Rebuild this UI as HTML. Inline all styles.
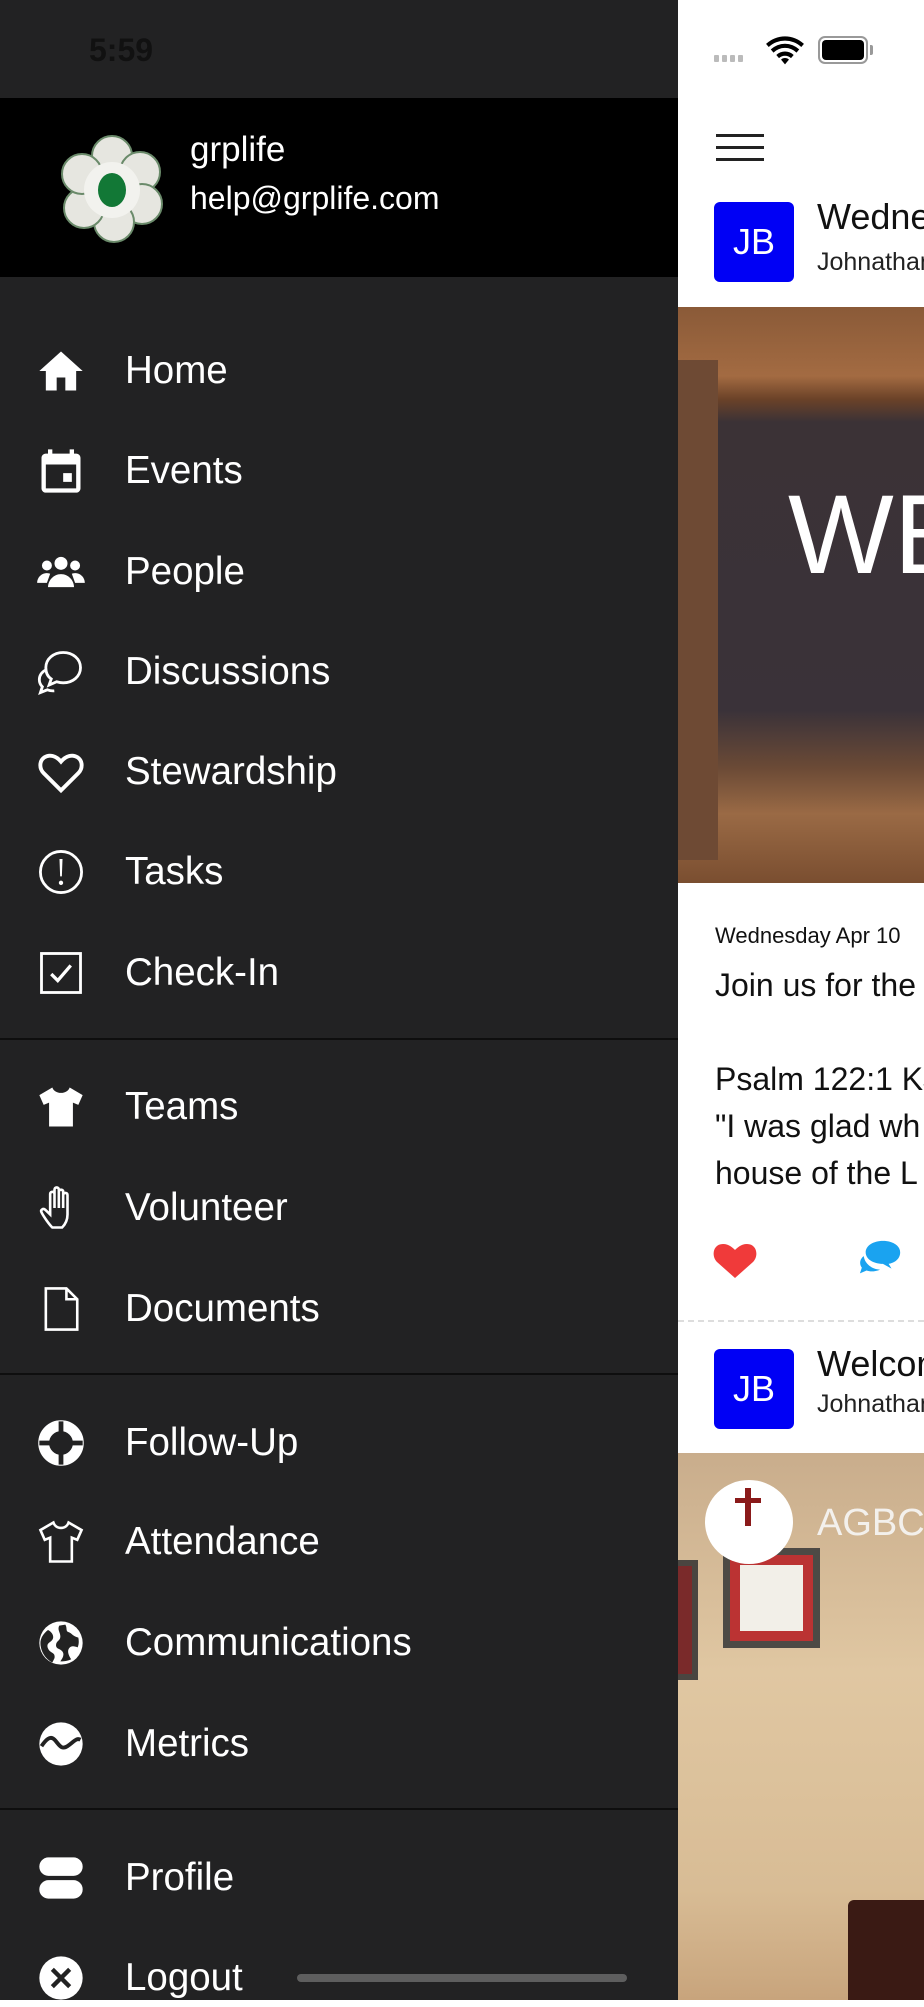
<!DOCTYPE html>
<html><head><meta charset="utf-8"><style>
*{margin:0;padding:0;box-sizing:border-box}
body{width:924px;height:2000px;overflow:hidden;position:relative;background:#fff;font-family:"Liberation Sans",sans-serif}
#drawer{position:absolute;left:0;top:0;width:678px;height:2000px;background:#222223}
#hdr{position:absolute;left:0;top:98px;width:678px;height:179px;background:#000}
.item{position:absolute;left:0;width:678px;height:60px}
.item svg{position:absolute;left:35px;top:5px;width:52px;height:52px}
.item span{position:absolute;left:125px;top:9px;color:#fff;font-size:38.5px;font-weight:300}
.div{position:absolute;left:0;width:678px;height:2px;background:#0e0e0e}
#right{position:absolute;left:678px;top:0;width:246px;height:2000px;background:#fff;overflow:hidden}
</style></head><body>
<div id="drawer">
<div style="position:absolute;left:89px;top:32px;font-size:32px;font-weight:bold;color:#111">5:59</div>
<div id="hdr">
<svg style="position:absolute;left:58px;top:34px" width="108" height="112" viewBox="0 0 108 112">
<g fill="#e6e6e0" stroke="#6a8a6a" stroke-width="2">
<circle cx="54" cy="24" r="20"/><circle cx="82" cy="40" r="20"/><circle cx="84" cy="72" r="20"/><circle cx="56" cy="90" r="20"/><circle cx="26" cy="76" r="20"/><circle cx="24" cy="42" r="20"/></g>
<circle cx="54" cy="58" r="28" fill="#f2f2ee"/><ellipse cx="54" cy="58" rx="14" ry="17" fill="#127836"/></svg>
<div style="position:absolute;left:190px;top:32px;color:#fff;font-size:35px;font-weight:300">grplife</div>
<div style="position:absolute;left:190px;top:82px;color:#fff;font-size:32px;font-weight:300">help@grplife.com</div>
</div>

<div class="item" style="top:340px"><svg viewBox="0 0 24 24"><path fill="#fff" d="M10 21v-6h4v6h5v-9h3L12 3 2 12h3v9z"/></svg><span>Home</span></div>
<div class="item" style="top:440px"><svg viewBox="0 0 24 24"><path fill="#fff" d="M19 4h-1V2h-2v2H8V2H6v2H5c-1.1 0-2 .9-2 2v14c0 1.1.9 2 2 2h14c1.1 0 2-.9 2-2V6c0-1.1-.9-2-2-2zm0 16H5V9h14v11zm-6-7h4v4h-4z"/></svg><span>Events</span></div>
<div class="item" style="top:541px"><svg viewBox="0 0 24 24"><g fill="#fff"><circle cx="12" cy="8" r="3"/><path d="M6 19c0-3 2.5-6 6-6s6 3 6 6z"/><circle cx="5.5" cy="9" r="2.3"/><circle cx="18.5" cy="9" r="2.3"/><path d="M1 17c0-2.5 2-4.5 4.5-4.5 1 0 1.5.3 1.5.3L5.5 17zM23 17c0-2.5-2-4.5-4.5-4.5-1 0-1.5.3-1.5.3l1.5 4.2z"/></g></svg><span>People</span></div>
<div class="item" style="top:641px"><svg viewBox="0 0 24 24"><path fill="none" stroke="#fff" stroke-width="1.3" d="M13 3c4.5 0 8 3 8 7s-3.5 7-8 7c-1 0-2-.2-3-.5L6.5 18l1-2.8C5.6 14 5 12 5 10c0-4 3.5-7 8-7zM5 11c-2 1-3 2.8-3 4.5 0 1.3.5 2.4 1.4 3.3L2.5 21.5l3.2-1.3c1 .4 2 .6 3.2.5"/></svg><span>Discussions</span></div>
<div class="item" style="top:741px"><svg viewBox="0 0 24 24"><path fill="none" stroke="#fff" stroke-width="1.8" d="M12 20.5 4 12.5C1.8 10.3 2 6.8 4.4 5.2 6.6 3.8 9.6 4.4 12 7.2c2.4-2.8 5.4-3.4 7.6-2 2.4 1.6 2.6 5.1.4 7.3z"/></svg><span>Stewardship</span></div>
<div class="item" style="top:841px"><svg viewBox="0 0 24 24"><circle cx="12" cy="12" r="9.5" fill="none" stroke="#fff" stroke-width="1.3"/><path fill="#fff" d="M11.3 6h1.4l-.3 8h-.8zM12 16a1 1 0 1 1 0 2 1 1 0 0 1 0-2z"/></svg><span>Tasks</span></div>
<div class="item" style="top:942px"><svg viewBox="0 0 24 24"><rect x="3" y="3" width="18" height="18" fill="none" stroke="#fff" stroke-width="1.3"/><path fill="none" stroke="#fff" stroke-width="1.5" d="M7.5 12.5l3 3 6-7"/></svg><span>Check-In</span></div>
<div class="div" style="top:1038px"></div>
<div class="item" style="top:1076px"><svg viewBox="0 0 24 24"><path fill="#fff" d="M8 3 2 6.5 4 11l2.5-1V21h11V10l2.5 1 2-4.5L16 3c-.5 1.5-2 2.5-4 2.5S8.5 4.5 8 3z"/></svg><span>Teams</span></div>
<div class="item" style="top:1177px"><svg viewBox="0 0 24 24"><path fill="none" stroke="#fff" stroke-width="1.2" d="M8 21c-1.5-1.5-4-5-5-7-.6-1.2.8-2 1.7-1.2L7 15V5.5c0-1.3 2-1.3 2 0V12V3.5c0-1.3 2-1.3 2 0V12V4.5c0-1.3 2-1.3 2 0V12V6c0-1.3 2-1.3 2 0v9c0 3-1.5 5-2.5 6z"/></svg><span>Volunteer</span></div>
<div class="item" style="top:1278px"><svg viewBox="0 0 24 24"><path fill="none" stroke="#fff" stroke-width="1.2" d="M5 2.5h9.5L19.5 7.5V21.5H5zM14.5 2.5v5h5"/></svg><span>Documents</span></div>
<div class="div" style="top:1373px"></div>
<div class="item" style="top:1412px"><svg viewBox="0 0 24 24"><circle cx="12" cy="12" r="8" fill="none" stroke="#fff" stroke-width="5"/><path stroke="#222" stroke-width="2.2" d="M12 2v5M12 17v5M2 12h5M17 12h5"/></svg><span>Follow-Up</span></div>
<div class="item" style="top:1511px"><svg viewBox="0 0 24 24"><path fill="none" stroke="#fff" stroke-width="1.2" d="M8.5 3 2.5 6.5 4.5 11l2.5-1V21h10V10l2.5 1 2-4.5-6-3.5c-.5 1.5-1.8 2.5-3.5 2.5S9 4.5 8.5 3z"/></svg><span>Attendance</span></div>
<div class="item" style="top:1612px"><svg viewBox="0 0 24 24"><circle cx="12" cy="12" r="10" fill="#fff"/><path fill="#222" d="M6 6c2 1 3 3 2 4.5S5 12 6 14.5 9.5 16 9 19l-1 2c-3-1.5-5.5-5-5.5-9C2.5 9.7 4 7.5 6 6zM14 3.5c1 1.5 0 3 1.5 3.5s2 2 4.5 2.5c.3 1.5.3 3-.3 4.5-1.5-.5-3-1-4 .5s0 3.5 1 5c-2 1-4 1-5 1 1-1.5 2-3 1-4.5s-3-1-3-3 2-2 2-4-1.5-3-.5-5z"/></svg><span>Communications</span></div>
<div class="item" style="top:1713px"><svg viewBox="0 0 24 24"><circle cx="12" cy="12" r="10" fill="#fff"/><path fill="none" stroke="#222" stroke-width="1.8" d="M3 13c2-3 4-5 6-3s3 5 6 3 4-4 6-3"/></svg><span>Metrics</span></div>
<div class="div" style="top:1808px"></div>
<div class="item" style="top:1847px"><svg viewBox="0 0 24 24"><rect x="2" y="2.5" width="20" height="8.5" rx="4.2" fill="#fff"/><rect x="2" y="13" width="20" height="8.5" rx="4.2" fill="#fff"/></svg><span>Profile</span></div>
<div class="item" style="top:1947px"><svg viewBox="0 0 24 24"><circle cx="12" cy="12" r="10" fill="#fff"/><path stroke="#222" stroke-width="2" d="M8 8l8 8M16 8l-8 8"/></svg><span>Logout</span></div>
<div style="position:absolute;left:297px;top:1974px;width:330px;height:8px;border-radius:4px;background:#5e5e5e"></div>
</div>

<div id="right">
<div style="position:absolute;left:36px;top:55px;display:flex;gap:3px"><i style="width:5px;height:7px;background:#bbb;border-radius:1px"></i><i style="width:5px;height:7px;background:#bbb;border-radius:1px"></i><i style="width:5px;height:7px;background:#bbb;border-radius:1px"></i><i style="width:5px;height:7px;background:#bbb;border-radius:1px"></i></div>
<svg style="position:absolute;left:88px;top:36px" width="38" height="30" viewBox="0 0 24 19"><path fill="#000" d="M12 18l-2.5-3a3.5 3.5 0 0 1 5 0zM6.5 12a8 8 0 0 1 11 0l-1.7 2a5.5 5.5 0 0 0-7.6 0zM3 8.5a13 13 0 0 1 18 0l-1.7 2a10.5 10.5 0 0 0-14.6 0zM0 5a17.5 17.5 0 0 1 24 0l-1.7 2A15 15 0 0 0 1.7 7z"/></svg>
<div style="position:absolute;left:140px;top:36px;width:50px;height:28px;border:2px solid #999;border-radius:7px;padding:2px"><div style="width:100%;height:100%;background:#000;border-radius:4px"></div></div>
<div style="position:absolute;left:192px;top:45px;width:3px;height:10px;background:#999;border-radius:0 2px 2px 0"></div>
<div style="position:absolute;left:38px;top:134px;width:48px;height:3px;background:#222;box-shadow:0 12px 0 #222,0 24px 0 #222"></div>
<div style="position:absolute;left:36px;top:202px;width:80px;height:80px;background:#0000f5;border-radius:6px;color:#fff;font-size:36px;text-align:center;line-height:80px">JB</div>
<div style="position:absolute;left:139px;top:196px;font-size:36px;color:#111;white-space:nowrap">Wednesday</div>
<div style="position:absolute;left:139px;top:248px;font-size:25px;color:#222;white-space:nowrap">Johnathan</div>
<div style="position:absolute;left:0;top:307px;width:246px;height:576px;background:linear-gradient(180deg,#8a5a38 0,#a36b42 12%,#6b4228 16%,#3b3236 20%,#3a3239 70%,#6b4a36 80%,#9a6a45 88%,#7a4e30 100%)"></div>
<div style="position:absolute;left:0;top:360px;width:40px;height:500px;background:#6e4a34"></div>
<div style="position:absolute;left:110px;top:470px;font-size:112px;color:#fff;font-weight:300;white-space:nowrap">WE</div>
<div style="position:absolute;left:37px;top:923px;font-size:22px;color:#111;white-space:nowrap">Wednesday Apr 10</div>
<div style="position:absolute;left:37px;top:962px;font-size:32px;color:#111;white-space:nowrap;line-height:47px">Join us for the<br><br>Psalm 122:1 KJV<br>"I was glad wh<br>house of the L</div>
<svg style="position:absolute;left:33px;top:1240px" width="48" height="40" viewBox="0 0 24 20"><path fill="#f03a3a" d="M12 19 3 11C0 8 1 2 6 2c3 0 5 2 6 3 1-1 3-3 6-3 5 0 6 6 3 9z"/></svg>
<svg style="position:absolute;left:180px;top:1238px" width="46" height="44" viewBox="0 0 24 22"><path fill="#1aa3f0" d="M13 1c5 0 9 2.5 9 6s-3 5.5-6 6l1.5 2.5L13 13c-5 0-9-2.5-9-6s4-6 9-6zM3 9c-2 1.5-2.5 4-1 6l-1 3 3.5-1.5c2 .8 5 .5 7-.5-4 0-8-3-8.5-7z"/></svg>
<div style="position:absolute;left:0;top:1320px;width:246px;border-top:2px dashed #ddd"></div>
<div style="position:absolute;left:36px;top:1349px;width:80px;height:80px;background:#0000f5;border-radius:6px;color:#fff;font-size:36px;text-align:center;line-height:80px">JB</div>
<div style="position:absolute;left:139px;top:1343px;font-size:36px;color:#111;white-space:nowrap">Welcome</div>
<div style="position:absolute;left:139px;top:1390px;font-size:25px;color:#222;white-space:nowrap">Johnathan</div>
<div style="position:absolute;left:0;top:1453px;width:246px;height:547px;background:linear-gradient(180deg,#c9ad8c,#e0c7a2 40%,#d8bc95 80%,#c8a47c)"></div>
<div style="position:absolute;left:-10px;top:1560px;width:30px;height:120px;background:#7a2a2a;border:6px solid #4a4540"></div>
<div style="position:absolute;left:45px;top:1548px;width:97px;height:100px;background:#b33;border:7px solid #4d4a45"><div style="margin:10px;height:66px;background:#f2efe8"></div></div>
<div style="position:absolute;left:170px;top:1900px;width:90px;height:100px;background:#3a1a14;border-radius:6px 0 0 0"></div>
<div style="position:absolute;left:27px;top:1480px;width:88px;height:84px;border-radius:50%;background:#fff"><div style="position:absolute;left:40px;top:8px;width:6px;height:38px;background:#8a1a1a"></div><div style="position:absolute;left:30px;top:18px;width:26px;height:5px;background:#8a1a1a"></div></div>
<div style="position:absolute;left:139px;top:1502px;font-size:38px;color:#f3f0ec;white-space:nowrap">AGBC</div>
</div>
</body></html>
